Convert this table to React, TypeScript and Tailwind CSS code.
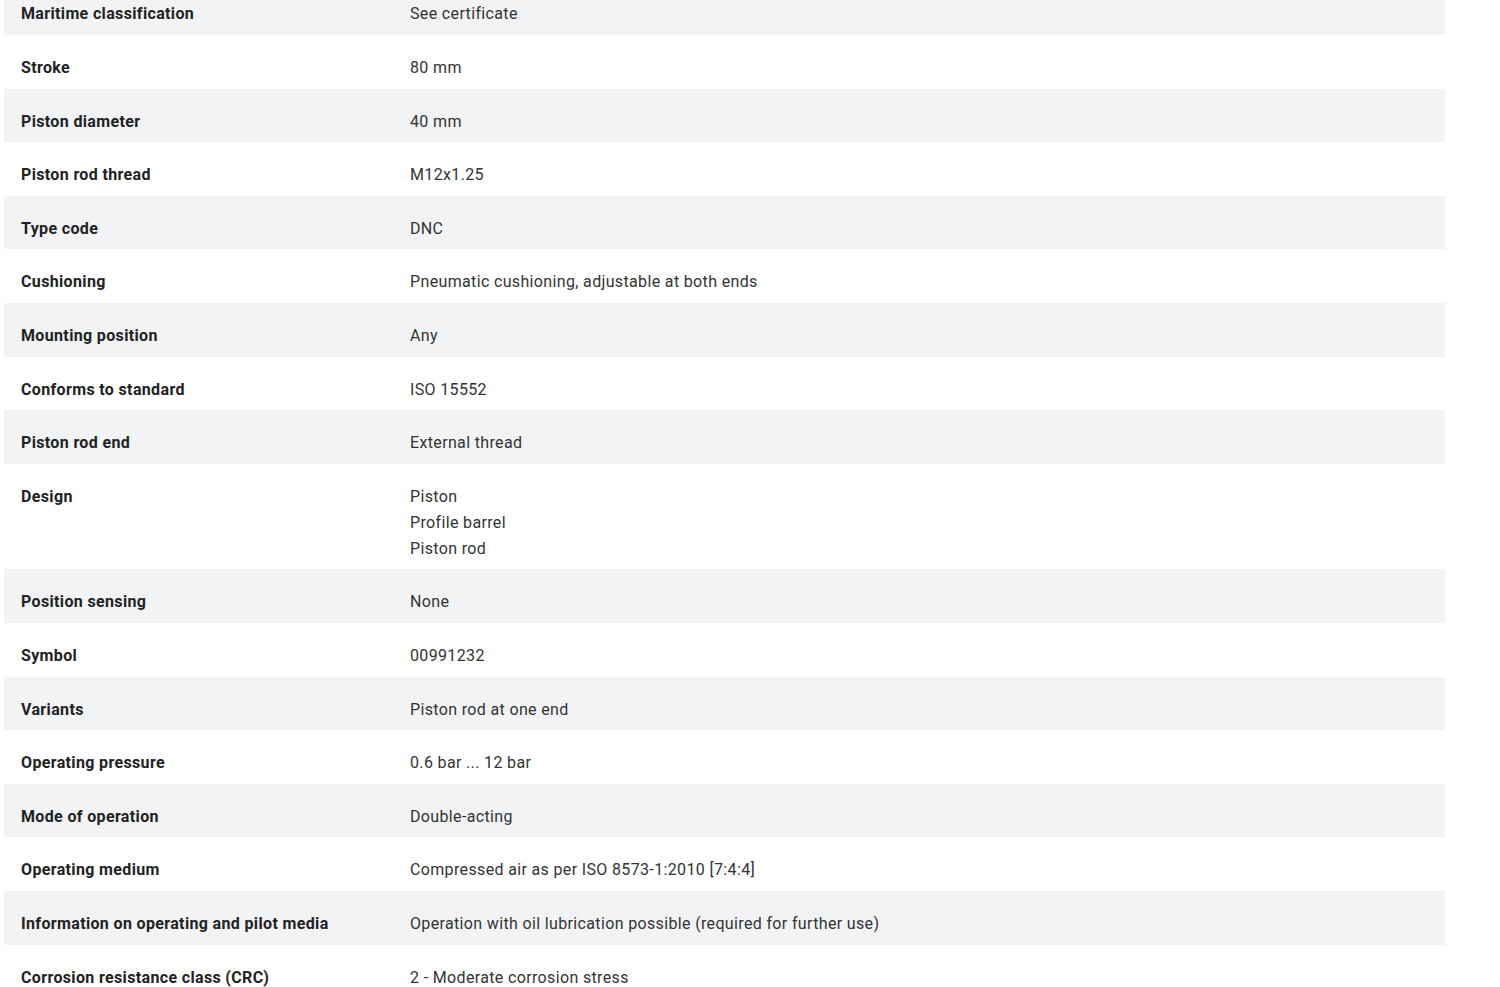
const rows: { label: string; value: string[] }[] = [
  { label: 'Maritime classification', value: ['See certificate'] },
  { label: 'Stroke', value: ['80 mm'] },
  { label: 'Piston diameter', value: ['40 mm'] },
  { label: 'Piston rod thread', value: ['M12x1.25'] },
  { label: 'Type code', value: ['DNC'] },
  { label: 'Cushioning', value: ['Pneumatic cushioning, adjustable at both ends'] },
  { label: 'Mounting position', value: ['Any'] },
  { label: 'Conforms to standard', value: ['ISO 15552'] },
  { label: 'Piston rod end', value: ['External thread'] },
  { label: 'Design', value: ['Piston', 'Profile barrel', 'Piston rod'] },
  { label: 'Position sensing', value: ['None'] },
  { label: 'Symbol', value: ['00991232'] },
  { label: 'Variants', value: ['Piston rod at one end'] },
  { label: 'Operating pressure', value: ['0.6 bar ... 12 bar'] },
  { label: 'Mode of operation', value: ['Double-acting'] },
  { label: 'Operating medium', value: ['Compressed air as per ISO 8573-1:2010 [7:4:4]'] },
  { label: 'Information on operating and pilot media', value: ['Operation with oil lubrication possible (required for further use)'] },
  { label: 'Corrosion resistance class (CRC)', value: ['2 - Moderate corrosion stress'] },
]

export default function App() {
  return (
    <div className="min-h-screen bg-white overflow-hidden" style={{ fontFamily: 'Roboto, "Liberation Sans", sans-serif' }}>
      <div className="w-[1441px] ml-[4px] -mt-[18.6px]">
        {rows.map((r, i) => (
          <div
            key={r.label}
            className={`grid grid-cols-[406px_1fr] pt-[20px] pb-[7.6px] text-[16px] leading-[26px] tracking-[0.35px] ${i % 2 === 0 ? 'bg-[#f2f3f5]' : 'bg-white'}`}
          >
            <div className="pl-[17px] font-bold text-[#222]">{r.label}</div>
            <div className="text-[#333]">
              {r.value.map((v) => (
                <div key={v}>{v}</div>
              ))}
            </div>
          </div>
        ))}
      </div>
    </div>
  )
}
